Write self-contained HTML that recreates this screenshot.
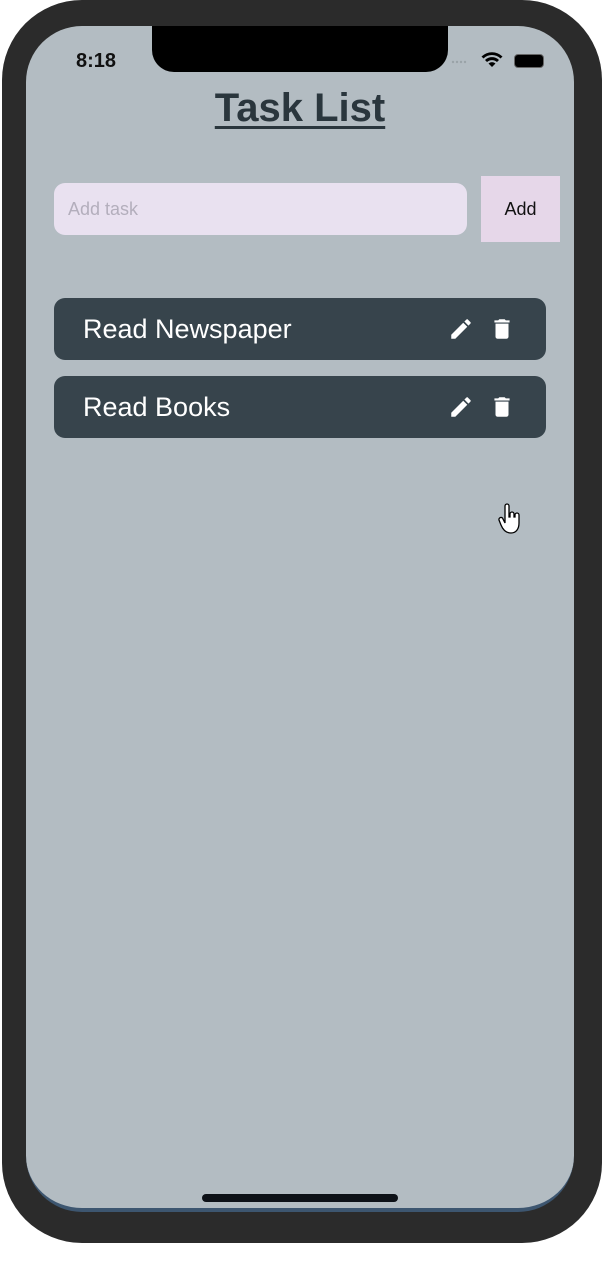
<!DOCTYPE html>
<html><head><style>
*{margin:0;padding:0;box-sizing:border-box}
body{width:604px;height:1276px;background:#fff;position:relative;font-family:"Liberation Sans",sans-serif;overflow:hidden}
.frame{position:absolute;left:2px;top:0;width:600px;height:1243px;background:#2b2b2b;border-radius:80px}
.screen{position:absolute;left:26px;top:26px;width:548px;height:1186px;background:#b3bcc2;border-radius:56px;overflow:hidden;border-bottom:4px solid #3d5670}
.notch{position:absolute;left:126px;top:-2px;width:296px;height:48px;background:#000;border-radius:0 0 22px 22px}
.time{position:absolute;left:50px;top:24px;font-size:20px;font-weight:bold;color:#111}
.title{position:absolute;left:0;width:548px;top:60px;text-align:center;font-size:40px;font-weight:bold;color:#2a363d;text-decoration:underline;text-decoration-thickness:3px;text-underline-offset:5px}
.input{position:absolute;left:28px;top:157px;width:413px;height:52px;background:#e9e1f0;border-radius:11px;color:#b3aebc;font-size:18px;padding:16px 0 0 14px}
.add{position:absolute;left:455px;top:150px;width:79px;height:66px;background:#e6d7e9;color:#111;font-size:18px;text-align:center;line-height:66px}
.card{position:absolute;left:28px;width:492px;height:62px;background:#37444c;border-radius:11px;color:#fff;font-size:27px;padding:16px 0 0 29px}
.card svg{position:absolute;top:18px}
.home{position:absolute;left:176px;top:1168px;width:196px;height:8px;background:#0d1117;border-radius:4px}
</style></head><body>
<div class="frame"></div>
<div class="screen">
<div class="notch"></div>
<div class="time">8:18</div>
<svg style="position:absolute;left:424px;top:24px" width="60" height="20" viewBox="0 0 60 20">
<g fill="#9aa3a8"><circle cx="3" cy="12" r="1.2"/><circle cx="7" cy="12" r="1.2"/><circle cx="11" cy="12" r="1.2"/><circle cx="15" cy="12" r="1.2"/></g>
<path d="M42 17l-3.5-3.5a5 5 0 0 1 7 0z" fill="#000"/><path d="M35 10a10 10 0 0 1 14 0l-2 2a7.5 7.5 0 0 0-10 0z" fill="#000"/><path d="M31.5 6.5a15 15 0 0 1 21 0l-2 2a12 12 0 0 0-17 0z" fill="#000"/>
</svg>
<div style="position:absolute;left:488px;top:28px;width:30px;height:14px;background:#000;border-radius:4px;border:1.5px solid #666"></div>
<div class="title">Task List</div>
<div class="input">Add task</div>
<div class="add">Add</div>
<div class="card" style="top:272px">Read Newspaper
<svg style="left:394px" width="26" height="26" viewBox="0 0 24 24"><path fill="#fff" d="M3 17.25V21h3.75L17.81 9.94l-3.75-3.75L3 17.25zM20.71 7.04a1 1 0 0 0 0-1.41l-2.34-2.34a1 1 0 0 0-1.41 0l-1.83 1.83 3.75 3.75 1.83-1.83z"/></svg>
<svg style="left:435px" width="26" height="26" viewBox="0 0 24 24"><path fill="#fff" d="M6 19a2 2 0 0 0 2 2h8a2 2 0 0 0 2-2V7H6v12zM19 4h-3.5l-1-1h-5l-1 1H5v2h14V4z"/></svg></div>
<div class="card" style="top:350px">Read Books
<svg style="left:394px" width="26" height="26" viewBox="0 0 24 24"><path fill="#fff" d="M3 17.25V21h3.75L17.81 9.94l-3.75-3.75L3 17.25zM20.71 7.04a1 1 0 0 0 0-1.41l-2.34-2.34a1 1 0 0 0-1.41 0l-1.830 1.83 3.75 3.75 1.83-1.83z"/></svg>
<svg style="left:435px" width="26" height="26" viewBox="0 0 24 24"><path fill="#fff" d="M6 19a2 2 0 0 0 2 2h8a2 2 0 0 0 2-2V7H6v12zM19 4h-3.5l-1-1h-5l-1 1H5v2h14V4z"/></svg></div>
<div class="home"></div>
</div>
<svg style="position:absolute;left:498px;top:503px" width="24" height="34" viewBox="0 0 24 34"><path d="M7 3a2 2 0 0 1 4 0v11h1v-3a2 2 0 0 1 4 0v3h1v-2a2 2 0 0 1 4 0v8c0 6-3 10-8 10s-8-3-10-8l-2-5a2 2 0 0 1 4-1l2 4z" fill="#fff" stroke="#000" stroke-width="1.3"/></svg>
</body></html>
